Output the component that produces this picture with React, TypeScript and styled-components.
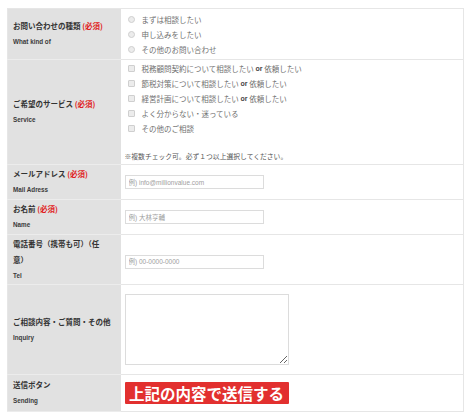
import React from 'react';
import styled, { createGlobalStyle } from 'styled-components';

const GlobalStyle = createGlobalStyle`
  html, body {
    margin: 0;
    padding: 0;
    background: #ffffff;
  }
  body {
    font-family: "Liberation Sans", "Noto Sans CJK JP", sans-serif;
    color: #333;
  }
`;

const Page = styled.div`
  padding: 8px 10px 0 7px;
`;

const Table = styled.table`
  width: 457px;
  border-collapse: collapse;
  border: 1px solid #e6e6e6;
  table-layout: fixed;
`;

const Row = styled.tr<{ $h: number }>`
  height: ${(p) => p.$h}px;
`;

const Th = styled.th`
  width: 113px;
  box-sizing: border-box;
  background: #e1e1e1;
  border-bottom: 1px solid #ececec;
  padding: 0 5px;
  text-align: left;
  vertical-align: middle;
  font-weight: normal;
`;

const Td = styled.td`
  border-bottom: 1px solid #e6e6e6;
  padding: 0 4px;
  vertical-align: middle;
`;

const Title = styled.div<{ $maxWidth?: number }>`
  font-family: "Noto Sans CJK JP", sans-serif;
  font-weight: bold;
  font-size: 7.5px;
  line-height: 16px;
  color: #333;
  max-width: ${(p) => (p.$maxWidth ? `${p.$maxWidth}px` : 'none')};
`;

const Required = styled.span`
  color: #e02020;
`;

const Sub = styled.div`
  font-family: "Liberation Sans", sans-serif;
  font-weight: bold;
  font-size: 6.3px;
  line-height: 16px;
  color: #3a3a3a;
`;

const OptionList = styled.div`
  display: flex;
  flex-direction: column;
`;

const Option = styled.label`
  display: flex;
  align-items: center;
  height: 15px;
  padding-left: 3px;
  font-family: "Noto Sans CJK JP", sans-serif;
  font-size: 7.5px;
  color: #707070;

  b {
    font-family: "Liberation Sans", sans-serif;
    font-weight: bold;
    color: #444;
    font-size: 7px;
  }
`;

const Mark = styled.span<{ $round?: boolean }>`
  display: inline-block;
  width: 5px;
  height: 5px;
  margin-right: 7px;
  border: 1px solid #cfcfcf;
  background: #ececec;
  border-radius: ${(p) => (p.$round ? '50%' : '1px')};
  flex: none;
`;

const Note = styled.div`
  margin-top: 13px;
  font-family: "Noto Sans CJK JP", sans-serif;
  font-size: 6.8px;
  line-height: 15px;
  color: #555;
`;

const TextInput = styled.input`
  display: block;
  width: 139px;
  height: 14px;
  box-sizing: border-box;
  border: 1px solid #dcdcdc;
  padding: 0 3px;
  margin: 0;
  font-family: "Liberation Sans", "Noto Sans CJK JP", sans-serif;
  font-size: 6.5px;
  outline: none;

  &::placeholder {
    color: #a0a0a0;
  }
`;

const TelInput = styled(TextInput)`
  margin-top: 4px;
`;

const TextArea = styled.textarea`
  display: block;
  width: 164px;
  height: 71px;
  box-sizing: border-box;
  border: 1px solid #dcdcdc;
  margin: 0;
  padding: 2px;
  outline: none;
`;

const SubmitButton = styled.button`
  display: block;
  width: 164px;
  height: 22px;
  margin: 0;
  padding: 0;
  border: none;
  border-radius: 1px;
  background: #e2302f;
  color: #fff;
  font-family: "Noto Sans CJK JP", sans-serif;
  font-weight: bold;
  font-size: 15.5px;
  line-height: 22px;
  white-space: nowrap;
`;

const kinds = ['まずは相談したい', '申し込みをしたい', 'その他のお問い合わせ'];

const services: { text: string; tail?: string }[] = [
  { text: '税務顧問契約について相談したい', tail: '依頼したい' },
  { text: '節税対策について相談したい', tail: '依頼したい' },
  { text: '経営計画について相談したい', tail: '依頼したい' },
  { text: 'よく分からない・迷っている' },
  { text: 'その他のご相談' },
];

const ContactForm = () => {
  return (
    <Page>
      <Table>
        <tbody>
          <Row $h={51}>
            <Th>
              <Title>
                お問い合わせの種類 <Required>(必須)</Required>
              </Title>
              <Sub>What kind of</Sub>
            </Th>
            <Td>
              <OptionList>
                {kinds.map((k) => (
                  <Option key={k}>
                    <Mark $round />
                    {k}
                  </Option>
                ))}
              </OptionList>
            </Td>
          </Row>
          <Row $h={105}>
            <Th>
              <Title>
                ご希望のサービス <Required>(必須)</Required>
              </Title>
              <Sub>Service</Sub>
            </Th>
            <Td>
              <OptionList>
                {services.map((s) => (
                  <Option key={s.text}>
                    <Mark />
                    {s.text}
                    {s.tail && (
                      <>
                        &nbsp;<b>or</b>&nbsp;{s.tail}
                      </>
                    )}
                  </Option>
                ))}
              </OptionList>
              <Note>※複数チェック可。必ず１つ以上選択してください。</Note>
            </Td>
          </Row>
          <Row $h={35}>
            <Th>
              <Title>
                メールアドレス <Required>(必須)</Required>
              </Title>
              <Sub>Mail Adress</Sub>
            </Th>
            <Td>
              <TextInput placeholder="例) info@millionvalue.com" />
            </Td>
          </Row>
          <Row $h={35}>
            <Th>
              <Title>
                お名前 <Required>(必須)</Required>
              </Title>
              <Sub>Name</Sub>
            </Th>
            <Td>
              <TextInput placeholder="例) 大林亨輔" />
            </Td>
          </Row>
          <Row $h={50}>
            <Th>
              <Title $maxWidth={92}>電話番号（携帯も可）（任意）</Title>
              <Sub>Tel</Sub>
            </Th>
            <Td>
              <TelInput placeholder="例) 00-0000-0000" />
            </Td>
          </Row>
          <Row $h={90}>
            <Th>
              <Title>ご相談内容・ご質問・その他</Title>
              <Sub>Inquiry</Sub>
            </Th>
            <Td>
              <TextArea />
            </Td>
          </Row>
          <Row $h={37}>
            <Th>
              <Title>送信ボタン</Title>
              <Sub>Sending</Sub>
            </Th>
            <Td>
              <SubmitButton type="button">上記の内容で送信する</SubmitButton>
            </Td>
          </Row>
        </tbody>
      </Table>
    </Page>
  );
};

export default function App() {
  return (
    <>
      <GlobalStyle />
      <ContactForm />
    </>
  );
}
